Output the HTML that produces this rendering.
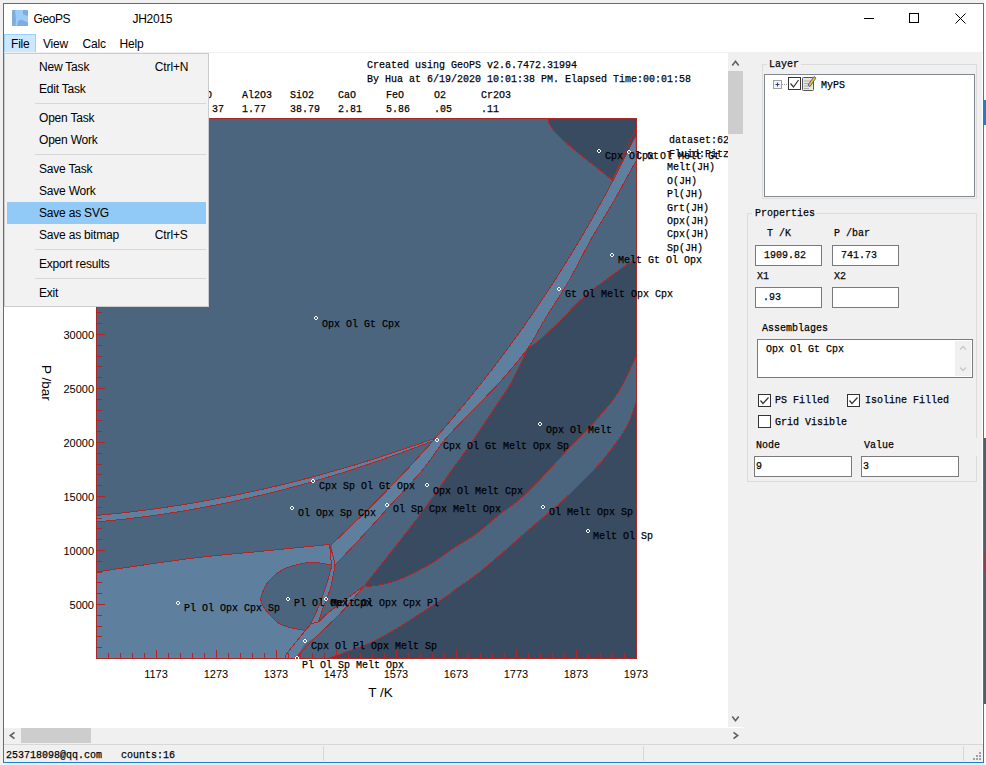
<!DOCTYPE html>
<html><head><meta charset="utf-8">
<style>
*{margin:0;padding:0;box-sizing:border-box;}
html,body{width:986px;height:765px;overflow:hidden;background:#f3f3f3;}
body{position:relative;font-family:"Liberation Sans",sans-serif;font-size:12px;color:#000;}
.a{position:absolute;}
.mo{font-family:"Liberation Mono",monospace;font-size:11.5px;white-space:pre;line-height:1;transform:scaleX(0.8696);transform-origin:0 0;-webkit-text-stroke:0.25px #000;}
.sa{font-family:"Liberation Sans",sans-serif;white-space:pre;line-height:1;}
.mi{position:absolute;left:39px;letter-spacing:-0.2px;font-family:"Liberation Sans",sans-serif;font-size:12px;line-height:1;white-space:pre;}
.sc{position:absolute;left:154.7px;letter-spacing:-0.1px;font-family:"Liberation Sans",sans-serif;font-size:12px;line-height:1;white-space:pre;}
.sep{position:absolute;left:35px;width:171px;height:1px;background:#d7d7d7;}
.gb{position:absolute;border:1px solid #dcdcdc;}
.tb{position:absolute;background:#fff;border:1px solid #7a7a7a;}
.cb{position:absolute;width:13px;height:13px;background:#fff;border:1px solid #333;}
</style></head><body>
<!-- outside desktop -->
<div class="a" style="left:0;top:0;width:986px;height:765px;background:#f0f0f0;"></div>
<div class="a" style="left:984px;top:0;width:2px;height:765px;background:#fafafa;"></div>
<div class="a" style="left:984px;top:100px;width:2px;height:25px;background:#1a7fd4;"></div>
<div class="a" style="left:984px;top:438px;width:2px;height:266px;background:#4a5f76;"></div>
<div class="a" style="left:984px;top:552px;width:2px;height:20px;background:#8a4050;"></div>
<!-- window -->
<div class="a" style="left:3px;top:3px;width:981px;height:760px;background:#fff;border:1px solid #1a7fd4;"></div>

<!-- title bar -->
<svg class="a" style="left:12px;top:10px" width="16" height="16" viewBox="0 0 16 16">
<rect x="0" y="0" width="16" height="16" rx="1.5" fill="#9dcbfa"/>
<path d="M1 0H3L4 9L3.5 16H1Q0 16 0 15V1Q0 0 1 0Z" fill="#7eacdd"/>
<path d="M11 0H15Q16 0 16 1V6L11 4.5Z" fill="#7eacdd"/>
<path d="M5 16L6 11L9 9.5L16 12.5V15Q16 16 15 16Z" fill="#7eacdd"/>
</svg>
<div class="a sa" style="left:33.5px;top:13px;font-size:12px;letter-spacing:-0.4px;">GeoPS</div>
<div class="a sa" style="left:132.5px;top:13px;font-size:12px;letter-spacing:-0.3px;">JH2015</div>
<svg class="a" style="left:850px;top:4px" width="130" height="30" viewBox="850 4 130 30">
<path d="M864 18.5H874" stroke="#000" stroke-width="1"/>
<rect x="909.5" y="13.5" width="9" height="9" fill="none" stroke="#000" stroke-width="1"/>
<path d="M955.5 13.5L965.5 23.5M965.5 13.5L955.5 23.5" stroke="#000" stroke-width="1"/>
</svg>

<!-- menu bar -->
<div class="a" style="left:4px;top:34px;width:32px;height:19px;background:#cce8ff;border:1px solid #99d1ff;"></div>
<div class="a sa" style="left:11px;top:37.5px;letter-spacing:-0.2px;">File</div>
<div class="a sa" style="left:43px;top:37.5px;letter-spacing:-0.2px;">View</div>
<div class="a sa" style="left:82.5px;top:37.5px;letter-spacing:-0.2px;">Calc</div>
<div class="a sa" style="left:119.5px;top:37.5px;letter-spacing:-0.2px;">Help</div>
<div class="a" style="left:4px;top:52px;width:979px;height:1px;background:#f0f0f0;"></div>

<!-- content -->
<div class="a" style="left:4px;top:53px;width:724px;height:675px;overflow:hidden;background:#fff;">
<div class="a" style="left:-4px;top:-53px;width:986px;height:765px;">
<svg class="a" style="left:0;top:0" width="986" height="765" viewBox="0 0 986 765">
<defs><clipPath id="pc"><rect x="96" y="118" width="541" height="541"/></clipPath></defs>
<rect x="96" y="118" width="540" height="540" fill="#4c657e"/>
<g clip-path="url(#pc)">
<path d="M548.4,118.0 C548.5,118.8 548.0,120.5 548.9,122.5 C549.8,124.5 550.9,127.1 553.6,130.3 C556.3,133.5 560.4,137.5 565.1,141.8 C569.8,146.1 576.2,151.4 581.8,155.9 C587.4,160.4 593.5,165.0 598.6,169.0 C603.7,173.0 609.9,178.2 612.2,180.0 L618.8,167.5 L636.0,136.5 L640.0,136.5 C640.0,132.8 655.3,117.8 640.0,114.0 C624.7,110.2 563.7,114.0 548.4,114.0 Z" fill="#394b60"/>
<path d="M635.3,136.5 C633.7,139.7 629.0,149.5 625.7,155.9 C622.4,162.4 619.1,168.9 615.7,175.4 C612.3,181.8 608.9,188.3 605.4,194.8 C601.9,201.3 598.3,207.7 594.6,214.2 C591.0,220.7 587.2,227.2 583.5,233.6 C579.7,240.1 575.8,246.6 571.8,253.1 C567.9,259.5 563.9,266.0 559.8,272.5 C555.7,279.0 551.5,285.5 547.2,291.9 C543.0,298.4 538.6,304.9 534.2,311.4 C529.8,317.8 525.2,324.3 520.6,330.8 C516.0,337.3 511.3,343.7 506.5,350.2 C501.7,356.7 496.9,363.2 491.9,369.6 C486.9,376.1 481.8,382.6 476.6,389.1 C471.5,395.5 466.2,402.0 460.8,408.5 C455.4,415.0 449.9,421.5 444.3,427.9 C438.7,434.4 433.0,440.9 427.2,447.4 C421.4,453.8 415.5,460.3 409.5,466.8 C403.4,473.3 397.3,479.7 391.0,486.2 C384.8,492.7 378.4,499.2 371.9,505.6 C365.4,512.1 358.8,518.6 352.0,525.1 C345.3,531.5 334.9,541.3 331.4,544.5 L334.7,565.7 C340.6,559.4 361.0,537.8 370.0,528.0 C379.0,518.2 380.1,516.7 388.9,507.0 C397.6,497.3 413.2,481.2 422.5,470.0 C431.8,458.8 436.4,449.8 444.7,440.0 C452.9,430.2 462.8,420.7 472.0,411.0 C481.2,401.3 490.7,392.5 500.0,382.0 C509.3,371.5 520.5,358.5 527.9,348.2 C535.3,337.9 537.5,331.4 544.4,320.0 C551.3,308.6 561.6,293.6 569.4,280.0 C577.2,266.4 583.9,252.0 591.4,238.7 C598.9,225.4 607.0,212.9 614.4,200.0 C621.8,187.1 632.4,167.6 636.0,161.1 Z" fill="#5f7f9e"/>
<path d="M90.0,515.5 C91.0,515.5 89.9,516.1 96.0,515.5 C102.1,515.0 116.5,513.6 126.7,512.4 C137.0,511.2 147.2,509.9 157.5,508.5 C167.7,507.0 178.0,505.5 188.2,503.8 C198.5,502.1 208.7,500.3 218.9,498.3 C229.2,496.4 239.4,494.3 249.7,492.1 C259.9,489.9 270.2,487.5 280.4,485.1 C290.7,482.6 300.9,480.0 311.2,477.3 C321.4,474.6 331.6,471.7 341.9,468.7 C352.1,465.8 362.4,462.7 372.6,459.4 C382.9,456.2 393.1,452.8 403.4,449.3 C413.6,445.9 429.0,440.3 434.1,438.5 L432.5,441.0 C427.4,442.9 412.1,448.9 401.9,452.6 C391.7,456.3 381.5,459.9 371.3,463.4 C361.1,466.8 350.9,470.2 340.7,473.3 C330.5,476.5 320.3,479.5 310.1,482.4 C299.9,485.3 289.7,488.0 279.5,490.6 C269.3,493.2 259.2,495.7 249.0,498.0 C238.8,500.3 228.6,502.5 218.4,504.5 C208.2,506.5 198.0,508.4 187.8,510.2 C177.6,511.9 167.4,513.5 157.2,515.0 C147.0,516.4 136.8,517.7 126.6,518.9 C116.4,520.1 102.1,521.5 96.0,522.0 C89.9,522.5 91.0,522.0 90.0,522.0 Z" fill="#5f7f9e"/>
<path d="M90.0,572.0 C91.0,572.0 78.8,574.3 96.0,572.0 C113.2,569.7 165.0,561.6 193.4,558.1 C221.8,554.6 243.7,553.1 266.4,550.8 C289.1,548.5 319.1,545.5 329.6,544.5 L333.8,558.9 C333.9,560.0 335.0,562.0 334.7,565.7 C334.4,569.4 332.9,577.0 332.1,581.0 C331.3,585.0 331.4,585.5 329.9,590.0 C328.4,594.5 324.9,603.0 323.0,608.3 C321.1,613.6 319.2,619.7 318.4,622.0 L296.0,658.0 C296.0,658.7 330.3,661.3 296.0,662.0 C261.7,662.7 124.3,662.0 90.0,662.0 Z" fill="#5f7f9e"/>
<path d="M260.5,598.6 C261.4,596.3 263.4,589.1 266.0,585.0 C268.6,580.9 272.7,577.0 276.0,574.2 C279.3,571.4 282.6,569.5 286.0,568.0 C289.4,566.5 292.5,565.8 296.4,564.9 C300.3,564.0 305.7,562.7 309.6,562.4 C313.5,562.1 316.4,562.6 320.0,563.0 C323.6,563.4 329.4,564.6 331.3,564.9 L330.6,570.0 C329.6,573.3 326.8,583.8 324.8,590.0 C322.8,596.2 320.8,601.6 318.4,607.4 C316.0,613.2 312.3,621.0 310.2,624.8 C308.1,628.6 306.4,629.4 305.6,630.3 L293.7,628.4 C291.4,627.6 283.9,626.1 280.0,623.9 C276.1,621.7 272.8,618.0 270.0,615.0 C267.2,612.0 264.6,608.7 263.0,606.0 C261.4,603.3 260.9,599.8 260.5,598.6 Z" fill="#4c657e"/>
<path d="M364.6,585.5 C359.7,589.2 341.5,602.8 334.9,607.8 C328.3,612.8 327.6,613.2 324.8,615.6 C322.1,618.0 320.7,620.6 318.4,622.0 C316.1,623.4 313.2,622.5 311.1,623.9 C309.0,625.3 309.6,625.4 305.6,630.3 C301.6,635.2 290.7,648.5 287.3,653.1 C283.9,657.7 285.8,657.2 285.5,658.0 L318.0,635.0 L340.0,613.8 Z" fill="#5f7f9e"/>
<path d="M527.9,348.2 C529.6,347.0 533.6,344.9 538.1,341.2 C542.6,337.5 547.0,333.6 555.0,325.9 C563.0,318.2 577.6,302.5 586.1,294.9 C594.6,287.2 598.9,285.3 606.0,280.0 C613.1,274.7 624.0,266.4 629.0,263.3 C634.0,260.2 634.8,262.0 636.0,261.7 L640.0,261.7 L640.0,356.5 L636.0,356.5 C633.8,361.1 626.9,376.8 623.0,384.0 C619.1,391.2 616.3,395.2 612.9,400.0 C609.5,404.8 606.6,407.6 602.4,412.5 C598.2,417.4 593.4,423.4 587.8,429.3 C582.2,435.2 576.3,440.4 569.0,448.1 C561.7,455.8 551.9,466.9 543.9,475.3 C535.9,483.7 528.2,491.9 520.9,498.3 C513.6,504.8 507.5,508.1 500.0,514.0 C492.5,520.0 483.3,528.6 476.0,534.0 C468.7,539.4 464.0,541.3 456.0,546.5 C448.0,551.7 438.0,559.6 427.9,565.4 C417.8,571.1 404.8,577.5 395.2,581.0 C385.6,584.5 375.5,585.5 370.4,586.3 C365.3,587.0 365.6,585.6 364.6,585.5 L408.4,530.0 C412.0,525.2 422.8,511.0 430.0,501.0 C437.2,491.0 444.7,480.2 451.9,470.0 C459.1,459.8 465.3,451.7 473.3,440.0 C481.3,428.3 493.4,410.0 500.0,400.0 C506.6,390.0 508.0,388.6 512.6,380.0 C517.2,371.4 525.4,353.5 527.9,348.2 Z" fill="#394b60"/>
<path d="M636.0,402.2 C634.9,405.3 632.1,415.3 629.6,420.9 C627.1,426.4 625.8,428.9 621.3,435.5 C616.8,442.1 608.7,453.1 602.4,460.6 C596.1,468.1 590.9,473.2 583.6,480.5 C576.3,487.8 567.2,496.7 558.5,504.5 C549.8,512.3 541.1,519.1 531.4,527.5 C521.6,535.9 509.2,547.1 500.0,555.0 C490.8,562.9 483.3,569.3 476.0,575.0 C468.7,580.7 461.8,584.8 456.0,589.0 C450.2,593.2 453.7,591.8 441.0,600.0 C428.3,608.2 398.6,628.5 380.0,638.2 C361.4,647.9 337.8,654.7 329.4,658.0 L329.4,662.0 C381.2,662.0 588.2,705.3 640.0,662.0 C691.8,618.7 640.0,445.5 640.0,402.2 Z" fill="#394b60"/>
<path d="M548.4,118.0 C548.5,118.8 548.0,120.5 548.9,122.5 C549.8,124.5 550.9,127.1 553.6,130.3 C556.3,133.5 560.4,137.5 565.1,141.8 C569.8,146.1 576.2,151.4 581.8,155.9 C587.4,160.4 593.5,165.0 598.6,169.0 C603.7,173.0 609.9,178.2 612.2,180.0" fill="none" stroke="#aa2828" stroke-width="1" shape-rendering="crispEdges"/>
<path d="M612.2,180.0 L635.7,129.1" fill="none" stroke="#aa2828" stroke-width="1" shape-rendering="crispEdges"/>
<path d="M635.3,136.5 C633.7,139.7 629.0,149.5 625.7,155.9 C622.4,162.4 619.1,168.9 615.7,175.4 C612.3,181.8 608.9,188.3 605.4,194.8 C601.9,201.3 598.3,207.7 594.6,214.2 C591.0,220.7 587.2,227.2 583.5,233.6 C579.7,240.1 575.8,246.6 571.8,253.1 C567.9,259.5 563.9,266.0 559.8,272.5 C555.7,279.0 551.5,285.5 547.2,291.9 C543.0,298.4 538.6,304.9 534.2,311.4 C529.8,317.8 525.2,324.3 520.6,330.8 C516.0,337.3 511.3,343.7 506.5,350.2 C501.7,356.7 496.9,363.2 491.9,369.6 C486.9,376.1 481.8,382.6 476.6,389.1 C471.5,395.5 466.2,402.0 460.8,408.5 C455.4,415.0 449.9,421.5 444.3,427.9 C438.7,434.4 433.0,440.9 427.2,447.4 C421.4,453.8 415.5,460.3 409.5,466.8 C403.4,473.3 397.3,479.7 391.0,486.2 C384.8,492.7 378.4,499.2 371.9,505.6 C365.4,512.1 358.8,518.6 352.0,525.1 C345.3,531.5 334.9,541.3 331.4,544.5" fill="none" stroke="#aa2828" stroke-width="1" shape-rendering="crispEdges"/>
<path d="M636.0,161.1 C632.4,167.6 621.8,187.1 614.4,200.0 C607.0,212.9 598.9,225.4 591.4,238.7 C583.9,252.0 577.2,266.4 569.4,280.0 C561.6,293.6 551.3,308.6 544.4,320.0 C537.5,331.4 535.3,337.9 527.9,348.2 C520.5,358.5 509.3,371.5 500.0,382.0 C490.7,392.5 481.2,401.3 472.0,411.0 C462.8,420.7 452.9,430.2 444.7,440.0 C436.4,449.8 431.8,458.8 422.5,470.0 C413.2,481.2 397.6,497.3 388.9,507.0 C380.1,516.7 379.0,518.2 370.0,528.0 C361.0,537.8 340.6,559.4 334.7,565.7" fill="none" stroke="#aa2828" stroke-width="1" shape-rendering="crispEdges"/>
<path d="M527.9,348.2 C529.6,347.0 533.6,344.9 538.1,341.2 C542.6,337.5 547.0,333.6 555.0,325.9 C563.0,318.2 577.6,302.5 586.1,294.9 C594.6,287.2 598.9,285.3 606.0,280.0 C613.1,274.7 624.0,266.4 629.0,263.3 C634.0,260.2 634.8,262.0 636.0,261.7" fill="none" stroke="#aa2828" stroke-width="1" shape-rendering="crispEdges"/>
<path d="M636.0,356.5 C633.8,361.1 626.9,376.8 623.0,384.0 C619.1,391.2 616.3,395.2 612.9,400.0 C609.5,404.8 606.6,407.6 602.4,412.5 C598.2,417.4 593.4,423.4 587.8,429.3 C582.2,435.2 576.3,440.4 569.0,448.1 C561.7,455.8 551.9,466.9 543.9,475.3 C535.9,483.7 528.2,491.9 520.9,498.3 C513.6,504.8 507.5,508.1 500.0,514.0 C492.5,520.0 483.3,528.6 476.0,534.0 C468.7,539.4 464.0,541.3 456.0,546.5 C448.0,551.7 438.0,559.6 427.9,565.4 C417.8,571.1 404.8,577.5 395.2,581.0 C385.6,584.5 375.5,585.5 370.4,586.3 C365.3,587.0 365.6,585.6 364.6,585.5" fill="none" stroke="#aa2828" stroke-width="1" shape-rendering="crispEdges"/>
<path d="M364.6,585.5 C371.9,576.2 397.5,544.1 408.4,530.0 C419.3,515.9 422.8,511.0 430.0,501.0 C437.2,491.0 444.7,480.2 451.9,470.0 C459.1,459.8 465.3,451.7 473.3,440.0 C481.3,428.3 493.4,410.0 500.0,400.0 C506.6,390.0 508.0,388.6 512.6,380.0 C517.2,371.4 525.4,353.5 527.9,348.2" fill="none" stroke="#aa2828" stroke-width="1" shape-rendering="crispEdges"/>
<path d="M636.0,402.2 C634.9,405.3 632.1,415.3 629.6,420.9 C627.1,426.4 625.8,428.9 621.3,435.5 C616.8,442.1 608.7,453.1 602.4,460.6 C596.1,468.1 590.9,473.2 583.6,480.5 C576.3,487.8 567.2,496.7 558.5,504.5 C549.8,512.3 541.1,519.1 531.4,527.5 C521.6,535.9 509.2,547.1 500.0,555.0 C490.8,562.9 483.3,569.3 476.0,575.0 C468.7,580.7 461.8,584.8 456.0,589.0 C450.2,593.2 453.7,591.8 441.0,600.0 C428.3,608.2 398.6,628.5 380.0,638.2 C361.4,647.9 337.8,654.7 329.4,658.0" fill="none" stroke="#aa2828" stroke-width="1" shape-rendering="crispEdges"/>
<path d="M96.0,515.5 C101.1,515.0 116.5,513.6 126.7,512.4 C137.0,511.2 147.2,509.9 157.5,508.5 C167.7,507.0 178.0,505.5 188.2,503.8 C198.5,502.1 208.7,500.3 218.9,498.3 C229.2,496.4 239.4,494.3 249.7,492.1 C259.9,489.9 270.2,487.5 280.4,485.1 C290.7,482.6 300.9,480.0 311.2,477.3 C321.4,474.6 331.6,471.7 341.9,468.7 C352.1,465.8 362.4,462.7 372.6,459.4 C382.9,456.2 393.1,452.8 403.4,449.3 C413.6,445.9 429.0,440.3 434.1,438.5" fill="none" stroke="#aa2828" stroke-width="1" shape-rendering="crispEdges"/>
<path d="M96.0,522.0 C101.1,521.5 116.4,520.1 126.6,518.9 C136.8,517.7 147.0,516.4 157.2,515.0 C167.4,513.5 177.6,511.9 187.8,510.2 C198.0,508.4 208.2,506.5 218.4,504.5 C228.6,502.5 238.8,500.3 249.0,498.0 C259.2,495.7 269.3,493.2 279.5,490.6 C289.7,488.0 299.9,485.3 310.1,482.4 C320.3,479.5 330.5,476.5 340.7,473.3 C350.9,470.2 361.1,466.8 371.3,463.4 C381.5,459.9 391.7,456.3 401.9,452.6 C412.1,448.9 427.4,442.9 432.5,441.0" fill="none" stroke="#aa2828" stroke-width="1" shape-rendering="crispEdges"/>
<path d="M96.0,572.0 C112.2,569.7 165.0,561.6 193.4,558.1 C221.8,554.6 243.7,553.1 266.4,550.8 C289.1,548.5 319.1,545.5 329.6,544.5" fill="none" stroke="#aa2828" stroke-width="1" shape-rendering="crispEdges"/>
<path d="M329.6,544.5 C329.9,547.8 331.1,559.8 331.3,564.0 C331.5,568.2 331.7,565.7 330.6,570.0 C329.5,574.3 326.8,583.8 324.8,590.0 C322.8,596.2 320.8,601.6 318.4,607.4 C316.0,613.2 312.3,621.0 310.2,624.8 C308.1,628.6 306.4,629.4 305.6,630.3" fill="none" stroke="#aa2828" stroke-width="1" shape-rendering="crispEdges"/>
<path d="M329.6,544.5 C330.3,546.9 333.0,555.4 333.8,558.9 C334.6,562.4 335.0,562.0 334.7,565.7 C334.4,569.4 332.9,577.0 332.1,581.0 C331.3,585.0 331.4,585.5 329.9,590.0 C328.4,594.5 324.9,603.0 323.0,608.3 C321.1,613.6 319.2,619.7 318.4,622.0" fill="none" stroke="#aa2828" stroke-width="1" shape-rendering="crispEdges"/>
<path d="M260.5,598.6 C261.4,596.3 263.4,589.1 266.0,585.0 C268.6,580.9 272.7,577.0 276.0,574.2 C279.3,571.4 282.6,569.5 286.0,568.0 C289.4,566.5 292.5,565.8 296.4,564.9 C300.3,564.0 305.7,562.7 309.6,562.4 C313.5,562.1 316.4,562.6 320.0,563.0 C323.6,563.4 329.4,564.6 331.3,564.9" fill="none" stroke="#aa2828" stroke-width="1" shape-rendering="crispEdges"/>
<path d="M305.6,630.3 C303.6,630.0 298.0,629.5 293.7,628.4 C289.4,627.3 283.9,626.1 280.0,623.9 C276.1,621.7 272.8,618.0 270.0,615.0 C267.2,612.0 264.6,608.7 263.0,606.0 C261.4,603.3 260.9,599.8 260.5,598.6" fill="none" stroke="#aa2828" stroke-width="1" shape-rendering="crispEdges"/>
<path d="M364.6,585.5 C359.7,589.2 341.5,602.8 334.9,607.8 C328.3,612.8 327.6,613.2 324.8,615.6 C322.1,618.0 320.7,620.6 318.4,622.0 C316.1,623.4 313.2,622.5 311.1,623.9 C309.0,625.3 309.6,625.4 305.6,630.3 C301.6,635.2 290.7,648.5 287.3,653.1 C283.9,657.7 285.8,657.2 285.5,658.0" fill="none" stroke="#aa2828" stroke-width="1" shape-rendering="crispEdges"/>
<path d="M295.5,658.0 C299.2,654.2 310.6,642.4 318.0,635.0 C325.4,627.6 332.2,622.0 340.0,613.8 C347.8,605.5 360.5,590.2 364.6,585.5" fill="none" stroke="#aa2828" stroke-width="1" shape-rendering="crispEdges"/>
</g>
<rect x="96.5" y="118.5" width="540" height="540" fill="none" stroke="#aa2828" stroke-width="1" shape-rendering="crispEdges"/>
<path d="M108.5,653V658 M120.5,653V658 M132.5,653V658 M144.5,653V658 M156.5,650V658 M168.5,653V658 M180.5,653V658 M192.5,653V658 M204.5,653V658 M216.5,650V658 M228.5,653V658 M240.5,653V658 M252.5,653V658 M264.5,653V658 M276.5,650V658 M288.5,653V658 M300.5,653V658 M312.5,653V658 M324.5,653V658 M336.5,650V658 M348.5,653V658 M360.5,653V658 M372.5,653V658 M384.5,653V658 M396.5,650V658 M408.5,653V658 M420.5,653V658 M432.5,653V658 M444.5,653V658 M456.5,650V658 M468.5,653V658 M480.5,653V658 M492.5,653V658 M504.5,653V658 M516.5,650V658 M528.5,653V658 M540.5,653V658 M552.5,653V658 M564.5,653V658 M576.5,650V658 M588.5,653V658 M600.5,653V658 M612.5,653V658 M624.5,653V658 M97,647.5H102 M97,636.5H102 M97,626.5H102 M97,615.5H102 M97,604.5H105 M97,593.5H102 M97,582.5H102 M97,572.5H102 M97,561.5H102 M97,550.5H105 M97,539.5H102 M97,528.5H102 M97,518.5H102 M97,507.5H102 M97,496.5H105 M97,485.5H102 M97,474.5H102 M97,464.5H102 M97,453.5H102 M97,442.5H105 M97,431.5H102 M97,420.5H102 M97,410.5H102 M97,399.5H102 M97,388.5H105 M97,377.5H102 M97,366.5H102 M97,356.5H102 M97,345.5H102 M97,334.5H105 M97,323.5H102 M97,312.5H102 M97,302.5H102 M97,291.5H102 M97,280.5H105 M97,269.5H102 M97,258.5H102 M97,248.5H102 M97,237.5H102 M97,226.5H105 M97,215.5H102 M97,204.5H102 M97,194.5H102 M97,183.5H102 M97,172.5H105 M97,161.5H102 M97,150.5H102 M97,140.5H102 M97,129.5H102" stroke="#aa2828" stroke-width="1" shape-rendering="crispEdges"/>
<path d="M598,149h2v1h-2zM597,150h1v2h-1zM600,150h1v2h-1zM598,152h2v1h-2z" fill="#fff" shape-rendering="crispEdges"/>
<path d="M628,150h2v1h-2zM627,151h1v2h-1zM630,151h1v2h-1zM628,153h2v1h-2z" fill="#fff" shape-rendering="crispEdges"/>
<path d="M611,253h2v1h-2zM610,254h1v2h-1zM613,254h1v2h-1zM611,256h2v1h-2z" fill="#fff" shape-rendering="crispEdges"/>
<path d="M558,287h2v1h-2zM557,288h1v2h-1zM560,288h1v2h-1zM558,290h2v1h-2z" fill="#fff" shape-rendering="crispEdges"/>
<path d="M315,316h2v1h-2zM314,317h1v2h-1zM317,317h1v2h-1zM315,319h2v1h-2z" fill="#fff" shape-rendering="crispEdges"/>
<path d="M539,422h2v1h-2zM538,423h1v2h-1zM541,423h1v2h-1zM539,425h2v1h-2z" fill="#fff" shape-rendering="crispEdges"/>
<path d="M436,438h2v1h-2zM435,439h1v2h-1zM438,439h1v2h-1zM436,441h2v1h-2z" fill="#fff" shape-rendering="crispEdges"/>
<path d="M312,479h2v1h-2zM311,480h1v2h-1zM314,480h1v2h-1zM312,482h2v1h-2z" fill="#fff" shape-rendering="crispEdges"/>
<path d="M426,483h2v1h-2zM425,484h1v2h-1zM428,484h1v2h-1zM426,486h2v1h-2z" fill="#fff" shape-rendering="crispEdges"/>
<path d="M291,506h2v1h-2zM290,507h1v2h-1zM293,507h1v2h-1zM291,509h2v1h-2z" fill="#fff" shape-rendering="crispEdges"/>
<path d="M386,503h2v1h-2zM385,504h1v2h-1zM388,504h1v2h-1zM386,506h2v1h-2z" fill="#fff" shape-rendering="crispEdges"/>
<path d="M542,505h2v1h-2zM541,506h1v2h-1zM544,506h1v2h-1zM542,508h2v1h-2z" fill="#fff" shape-rendering="crispEdges"/>
<path d="M587,529h2v1h-2zM586,530h1v2h-1zM589,530h1v2h-1zM587,532h2v1h-2z" fill="#fff" shape-rendering="crispEdges"/>
<path d="M177,601h2v1h-2zM176,602h1v2h-1zM179,602h1v2h-1zM177,604h2v1h-2z" fill="#fff" shape-rendering="crispEdges"/>
<path d="M287,597h2v1h-2zM286,598h1v2h-1zM289,598h1v2h-1zM287,600h2v1h-2z" fill="#fff" shape-rendering="crispEdges"/>
<path d="M325,597h2v1h-2zM324,598h1v2h-1zM327,598h1v2h-1zM325,600h2v1h-2z" fill="#fff" shape-rendering="crispEdges"/>
<path d="M304,639h2v1h-2zM303,640h1v2h-1zM306,640h1v2h-1zM304,642h2v1h-2z" fill="#fff" shape-rendering="crispEdges"/>
<path d="M296,656h2v1h-2zM295,657h1v2h-1zM298,657h1v2h-1zM296,659h2v1h-2z" fill="#fff" shape-rendering="crispEdges"/>
</svg>
<div class="a mo" style="left:367.3px;top:58.7px;font-size:11.5px;color:#000;">Created using GeoPS v2.6.7472.31994</div>
<div class="a mo" style="left:367.3px;top:72.5px;font-size:11.5px;color:#000;">By Hua at 6/19/2020 10:01:38 PM. Elapsed Time:00:01:58</div>
<div class="a mo" style="left:145.7px;top:88.7px;font-size:11.5px;color:#000;">Na2O</div>
<div class="a mo" style="left:193.7px;top:88.7px;font-size:11.5px;color:#000;">MgO</div>
<div class="a mo" style="left:193.7px;top:102.7px;font-size:11.5px;color:#000;">45 37</div>
<div class="a mo" style="left:241.7px;top:88.7px;font-size:11.5px;color:#000;">Al2O3</div>
<div class="a mo" style="left:241.7px;top:102.7px;font-size:11.5px;color:#000;">1.77</div>
<div class="a mo" style="left:289.7px;top:88.7px;font-size:11.5px;color:#000;">SiO2</div>
<div class="a mo" style="left:289.7px;top:102.7px;font-size:11.5px;color:#000;">38.79</div>
<div class="a mo" style="left:337.5px;top:88.7px;font-size:11.5px;color:#000;">CaO</div>
<div class="a mo" style="left:337.5px;top:102.7px;font-size:11.5px;color:#000;">2.81</div>
<div class="a mo" style="left:385.6px;top:88.7px;font-size:11.5px;color:#000;">FeO</div>
<div class="a mo" style="left:385.6px;top:102.7px;font-size:11.5px;color:#000;">5.86</div>
<div class="a mo" style="left:434px;top:88.7px;font-size:11.5px;color:#000;">O2</div>
<div class="a mo" style="left:434px;top:102.7px;font-size:11.5px;color:#000;">.05</div>
<div class="a mo" style="left:481.4px;top:88.7px;font-size:11.5px;color:#000;">Cr2O3</div>
<div class="a mo" style="left:481.4px;top:102.7px;font-size:11.5px;color:#000;">.11</div>
<div class="a mo" style="left:668.6px;top:133.9px;font-size:11.5px;color:#000;">dataset:62</div>
<div class="a mo" style="left:668.6px;top:148.1px;font-size:11.5px;color:#000;">Fluid:Pitz</div>
<div class="a mo" style="left:667.3px;top:161.4px;font-size:11.5px;color:#000;">Melt(JH)</div>
<div class="a mo" style="left:667.3px;top:174.7px;font-size:11.5px;color:#000;">O(JH)</div>
<div class="a mo" style="left:667.3px;top:188.1px;font-size:11.5px;color:#000;">Pl(JH)</div>
<div class="a mo" style="left:667.3px;top:201.5px;font-size:11.5px;color:#000;">Grt(JH)</div>
<div class="a mo" style="left:667.3px;top:214.9px;font-size:11.5px;color:#000;">Opx(JH)</div>
<div class="a mo" style="left:667.3px;top:228.3px;font-size:11.5px;color:#000;">Cpx(JH)</div>
<div class="a mo" style="left:667.3px;top:242.3px;font-size:11.5px;color:#000;">Sp(JH)</div>
<div class="a sa" style="left:40px;width:54px;text-align:right;top:599.5px;font-size:11px;">5000</div>
<div class="a sa" style="left:40px;width:54px;text-align:right;top:545.5px;font-size:11px;">10000</div>
<div class="a sa" style="left:40px;width:54px;text-align:right;top:491.5px;font-size:11px;">15000</div>
<div class="a sa" style="left:40px;width:54px;text-align:right;top:437.5px;font-size:11px;">20000</div>
<div class="a sa" style="left:40px;width:54px;text-align:right;top:383.5px;font-size:11px;">25000</div>
<div class="a sa" style="left:40px;width:54px;text-align:right;top:329.5px;font-size:11px;">30000</div>
<div class="a sa" style="left:136.0px;width:40px;text-align:center;top:668.5px;font-size:11px;">1173</div>
<div class="a sa" style="left:196.0px;width:40px;text-align:center;top:668.5px;font-size:11px;">1273</div>
<div class="a sa" style="left:256.0px;width:40px;text-align:center;top:668.5px;font-size:11px;">1373</div>
<div class="a sa" style="left:316.0px;width:40px;text-align:center;top:668.5px;font-size:11px;">1473</div>
<div class="a sa" style="left:376.0px;width:40px;text-align:center;top:668.5px;font-size:11px;">1573</div>
<div class="a sa" style="left:436.0px;width:40px;text-align:center;top:668.5px;font-size:11px;">1673</div>
<div class="a sa" style="left:496.0px;width:40px;text-align:center;top:668.5px;font-size:11px;">1773</div>
<div class="a sa" style="left:556.0px;width:40px;text-align:center;top:668.5px;font-size:11px;">1873</div>
<div class="a sa" style="left:616.0px;width:40px;text-align:center;top:668.5px;font-size:11px;">1973</div>
<div class="a sa" style="left:368.3px;top:685.6px;font-size:13.5px;color:#000;">T /K</div>
<div class="a sa" style="left:38.5px;top:364.5px;font-size:13.5px;transform-origin:0 0;transform:translate(14px,0) rotate(90deg);">P /bar</div>
<div class="a mo" style="left:604.8px;top:149.7px;font-size:11.5px;color:#000;">Cpx Ol Gt</div>
<div class="a mo" style="left:635.5px;top:150.2px;font-size:11.5px;color:#000;">Cpx Ol Melt Gt</div>
<div class="a mo" style="left:617.5px;top:254.2px;font-size:11.5px;color:#000;">Melt Gt Ol Opx</div>
<div class="a mo" style="left:564.7px;top:288.0px;font-size:11.5px;color:#000;">Gt Ol Melt Opx Cpx</div>
<div class="a mo" style="left:321.9px;top:318.1px;font-size:11.5px;color:#000;">Opx Ol Gt Cpx</div>
<div class="a mo" style="left:545.9px;top:424.0px;font-size:11.5px;color:#000;">Opx Ol Melt</div>
<div class="a mo" style="left:442.6px;top:440.3px;font-size:11.5px;color:#000;">Cpx Ol Gt Melt Opx Sp</div>
<div class="a mo" style="left:318.8px;top:480.0px;font-size:11.5px;color:#000;">Cpx Sp Ol Gt Opx</div>
<div class="a mo" style="left:432.5px;top:485.1px;font-size:11.5px;color:#000;">Opx Ol Melt Cpx</div>
<div class="a mo" style="left:297.6px;top:506.9px;font-size:11.5px;color:#000;">Ol Opx Sp Cpx</div>
<div class="a mo" style="left:392.7px;top:503.3px;font-size:11.5px;color:#000;">Ol Sp Cpx Melt Opx</div>
<div class="a mo" style="left:548.5px;top:506.1px;font-size:11.5px;color:#000;">Ol Melt Opx Sp</div>
<div class="a mo" style="left:593.2px;top:529.7px;font-size:11.5px;color:#000;">Melt Ol Sp</div>
<div class="a mo" style="left:183.6px;top:601.9px;font-size:11.5px;color:#000;">Pl Ol Opx Cpx Sp</div>
<div class="a mo" style="left:293.8px;top:597.3px;font-size:11.5px;color:#000;">Pl Ol Opx Cpx</div>
<div class="a mo" style="left:331.3px;top:597.3px;font-size:11.5px;color:#000;">Melt Ol Opx Cpx Pl</div>
<div class="a mo" style="left:310.7px;top:640.1px;font-size:11.5px;color:#000;">Cpx Ol Pl Opx Melt Sp</div>
<div class="a mo" style="left:301.7px;top:659.1px;font-size:11.5px;color:#000;">Pl Ol Sp Melt Opx</div>
</div>
</div>
<!-- vertical scrollbar -->
<div class="a" style="left:728px;top:53px;width:17px;height:675px;background:#f0f0f0;"></div>
<div class="a" style="left:728px;top:71px;width:15px;height:63px;background:#cdcdcd;"></div>
<div class="a" style="left:728px;top:727px;width:16px;height:1px;background:#fff;"></div>
<!-- horizontal scrollbar -->
<div class="a" style="left:4px;top:728px;width:741px;height:17px;background:#f0f0f0;"></div>
<div class="a" style="left:21px;top:728px;width:70px;height:15px;background:#cdcdcd;"></div>
<svg class="a" style="left:0;top:0" width="986" height="765" viewBox="0 0 986 765">
<path d="M732.3 65.5L735.5 61.3L738.7 65.5" fill="none" stroke="#606060" stroke-width="1.6"/>
<path d="M732.3 716.5L735.5 720.7L738.7 716.5" fill="none" stroke="#606060" stroke-width="1.6"/>
<path d="M14.5 732.3L10.3 735.5L14.5 738.7" fill="none" stroke="#606060" stroke-width="1.6"/>
<path d="M733.5 732.3L737.7 735.5L733.5 738.7" fill="none" stroke="#606060" stroke-width="1.6"/>
</svg>
<!-- right panel -->
<div class="a" style="left:745px;top:53px;width:238px;height:691px;background:#f0f0f0;"></div>
<div class="a" style="left:762px;top:64px;width:215px;height:135px;border:1px solid #dcdcdc;"></div>
<div class="a" style="left:766.8px;top:62px;width:34px;height:4px;background:#f0f0f0;"></div>
<div class="a mo" style="left:768.8px;top:57.7px;font-size:11.5px;color:#000;">Layer</div>
<div class="a" style="left:764px;top:74px;width:211px;height:123px;background:#fff;border:1px solid #828790;"></div>
<svg class="a" style="left:770px;top:74px" width="60" height="20" viewBox="770 74 60 20"><rect x="773.5" y="80.5" width="8" height="8" fill="#f4f4f4" stroke="#a0a0a0" stroke-width="1"/><path d="M775.5 84.5H779.5M777.5 82.5V86.5" stroke="#1a3d9e" stroke-width="1"/><path d="M782 84.5H788" stroke="#999" stroke-width="1" stroke-dasharray="1 1"/><rect x="788.5" y="77.5" width="12" height="12" fill="#fff" stroke="#333" stroke-width="1"/><path d="M790.5 83.5L793.5 87L798.5 80" fill="none" stroke="#333" stroke-width="1.2"/><rect x="802.5" y="77.5" width="11" height="13" rx="1" fill="#e8e8e8" stroke="#555" stroke-width="1"/><path d="M804 81H811M804 83.5H811M804 86H811M804 88.5H809" stroke="#999" stroke-width="0.8"/><path d="M808 85L814 76.5L816 78L810 86.5Z" fill="#f5c000" stroke="#2a4fa8" stroke-width="0.8"/></svg>
<div class="a mo" style="left:821px;top:78.7px;font-size:11.5px;color:#000;">MyPS</div>
<div class="a" style="left:747px;top:213px;width:230px;height:269px;border:1px solid #dcdcdc;border-bottom:none;"></div>
<div class="a" style="left:747px;top:481px;width:230px;height:1px;background:#dcdcdc;"></div>
<div class="a" style="left:975px;top:438px;width:4px;height:18px;background:#f0f0f0;"></div>
<div class="a" style="left:752px;top:211px;width:64px;height:4px;background:#f0f0f0;"></div>
<div class="a mo" style="left:754.7px;top:207.2px;font-size:11.5px;color:#000;">Properties</div>
<div class="a mo" style="left:766.9px;top:226.7px;font-size:11.5px;color:#000;">T /K</div>
<div class="a mo" style="left:833.9px;top:226.7px;font-size:11.5px;color:#000;">P /bar</div>
<div class="a" style="left:755px;top:245px;width:67px;height:21px;background:#fff;border:1px solid #7a7a7a;"></div>
<div class="a mo" style="left:764px;top:249.0px;font-size:11.5px;color:#000;">1909.82</div>
<div class="a" style="left:832px;top:245px;width:67px;height:21px;background:#fff;border:1px solid #7a7a7a;"></div>
<div class="a mo" style="left:841.2px;top:249.0px;font-size:11.5px;color:#000;">741.73</div>
<div class="a mo" style="left:756.7px;top:269.5px;font-size:11.5px;color:#000;">X1</div>
<div class="a mo" style="left:833.9px;top:269.5px;font-size:11.5px;color:#000;">X2</div>
<div class="a" style="left:755px;top:287px;width:67px;height:21px;background:#fff;border:1px solid #7a7a7a;"></div>
<div class="a mo" style="left:763.3px;top:290.5px;font-size:11.5px;color:#000;">.93</div>
<div class="a" style="left:832px;top:287px;width:67px;height:21px;background:#fff;border:1px solid #7a7a7a;"></div>
<div class="a mo" style="left:762px;top:321.9px;font-size:11.5px;color:#000;">Assemblages</div>
<div class="a" style="left:757px;top:339px;width:216px;height:39px;background:#fff;border:1px solid #7a7a7a;"></div>
<div class="a mo" style="left:765.7px;top:343.1px;font-size:11.5px;color:#000;">Opx Ol Gt Cpx</div>
<div class="a" style="left:955px;top:341px;width:16px;height:35px;background:#f0f0f0;"></div>
<svg class="a" style="left:955px;top:341px" width="16" height="35" viewBox="0 0 16 35"><path d="M5 8.5L8 5.5L11 8.5" fill="none" stroke="#c8c8c8" stroke-width="1.3"/><path d="M5 26.5L8 29.5L11 26.5" fill="none" stroke="#c8c8c8" stroke-width="1.3"/></svg>
<div class="a" style="left:758px;top:394px;width:13px;height:13px;background:#fff;border:1px solid #333;"></div><svg class="a" style="left:758px;top:394px" width="13" height="13" viewBox="0 0 13 13"><path d="M2.5 6.5L5 9.5L10.5 3.5" fill="none" stroke="#333" stroke-width="1.2"/></svg>
<div class="a mo" style="left:775.4px;top:394.4px;font-size:11.5px;color:#000;">PS Filled</div>
<div class="a" style="left:847px;top:394px;width:13px;height:13px;background:#fff;border:1px solid #333;"></div><svg class="a" style="left:847px;top:394px" width="13" height="13" viewBox="0 0 13 13"><path d="M2.5 6.5L5 9.5L10.5 3.5" fill="none" stroke="#333" stroke-width="1.2"/></svg>
<div class="a mo" style="left:864.8px;top:394.4px;font-size:11.5px;color:#000;">Isoline Filled</div>
<div class="a" style="left:758px;top:415px;width:13px;height:13px;background:#fff;border:1px solid #333;"></div>
<div class="a mo" style="left:775.4px;top:415.6px;font-size:11.5px;color:#000;">Grid Visible</div>
<div class="a mo" style="left:756px;top:438.7px;font-size:11.5px;color:#000;">Node</div>
<div class="a mo" style="left:863.5px;top:438.7px;font-size:11.5px;color:#000;">Value</div>
<div class="a" style="left:754px;top:456px;width:98px;height:21px;background:#fff;border:1px solid #7a7a7a;"></div>
<div class="a mo" style="left:756px;top:460.2px;font-size:11.5px;color:#000;">9</div>
<div class="a" style="left:861px;top:456px;width:98px;height:21px;background:#fff;border:1px solid #7a7a7a;"></div>
<div class="a mo" style="left:863px;top:460.2px;font-size:11.5px;color:#000;">3</div>
<div class="a" style="left:982px;top:53px;width:1px;height:691px;background:#fff;"></div>
<!-- status bar -->
<div class="a" style="left:4px;top:744px;width:979px;height:1px;background:#d7d7d7;"></div>
<div class="a" style="left:4px;top:745px;width:979px;height:17px;background:#f0f0f0;"></div>
<div class="a" style="left:323px;top:746px;width:1px;height:15px;background:#d7d7d7;"></div>
<div class="a" style="left:643px;top:746px;width:1px;height:15px;background:#d7d7d7;"></div>
<div class="a" style="left:963px;top:746px;width:1px;height:15px;background:#d7d7d7;"></div>
<svg class="a" style="left:970px;top:750px" width="12" height="12" viewBox="0 0 12 12" fill="#a0a0a0">
<rect x="9" y="2" width="2" height="2"/><rect x="6" y="5" width="2" height="2"/><rect x="9" y="5" width="2" height="2"/>
<rect x="3" y="8" width="2" height="2"/><rect x="6" y="8" width="2" height="2"/><rect x="9" y="8" width="2" height="2"/>
</svg>
<div class="a mo" style="left:5.7px;top:748.9px;font-size:11.5px;color:#000;">253718098@qq.com</div>
<div class="a mo" style="left:120.7px;top:748.9px;font-size:11.5px;color:#000;">counts:16</div>

<!-- file menu dropdown -->
<div class="a" style="left:4px;top:53px;width:205px;height:254px;background:#f2f2f2;border:1px solid #cccccc;"></div>
<div class="a" style="left:7px;top:201.5px;width:199px;height:22px;background:#91c9f7;"></div>
<div class="sep" style="top:103px;"></div>
<div class="sep" style="top:154px;"></div>
<div class="sep" style="top:249px;"></div>
<div class="sep" style="top:278px;"></div>
<div class="mi" style="top:60.7px;">New Task</div><div class="sc" style="top:60.7px;">Ctrl+N</div>
<div class="mi" style="top:82.7px;">Edit Task</div>
<div class="mi" style="top:111.7px;">Open Task</div>
<div class="mi" style="top:133.7px;">Open Work</div>
<div class="mi" style="top:162.7px;">Save Task</div>
<div class="mi" style="top:184.7px;">Save Work</div>
<div class="mi" style="top:206.7px;">Save as SVG</div>
<div class="mi" style="top:228.7px;">Save as bitmap</div><div class="sc" style="top:228.7px;">Ctrl+S</div>
<div class="mi" style="top:257.7px;">Export results</div>
<div class="mi" style="top:286.7px;">Exit</div>
</body></html>
